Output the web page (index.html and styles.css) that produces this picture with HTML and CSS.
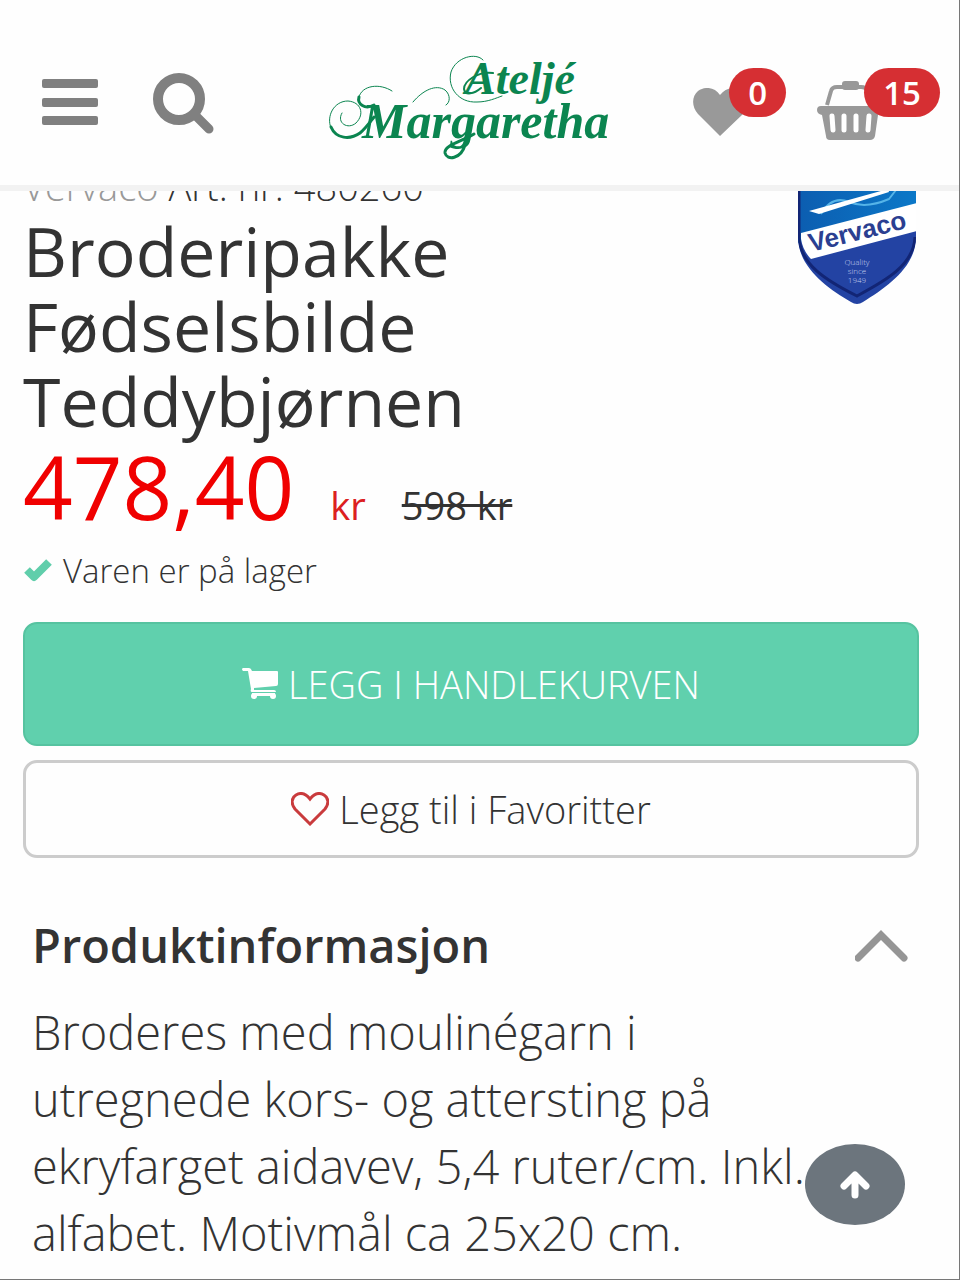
FILE: index.html
```html
<!DOCTYPE html>
<html lang="no">
<head>
  <meta charset="UTF-8" />
  <meta name="viewport" content="width=device-width, initial-scale=1.0"/>
  <title>Broderipakke Fødselsbilde Teddybjørnen - Ateljé Margaretha</title>
  <link rel="stylesheet" href="styles.css">
</head>
<body>

  <!-- Header -->
  <header class="site-header">
    <div class="header-left">
      <button class="icon-btn" aria-label="Meny">
        <svg width="56" height="52" viewBox="0 0 56 52" fill="#808080">
          <rect y="1" width="56" height="9" rx="2"/>
          <rect y="20" width="56" height="9" rx="2"/>
          <rect y="38" width="56" height="9" rx="2"/>
        </svg>
      </button>
      <button class="icon-btn" aria-label="Søk">
        <svg width="62" height="62" viewBox="0 0 62 62" fill="none" stroke="#808080">
          <circle cx="26" cy="26" r="21" stroke-width="10"/>
          <path d="M41 41 L56 56" stroke-width="9" stroke-linecap="round"/>
        </svg>
      </button>
    </div>

    <a href="#" class="logo" aria-label="Ateljé Margaretha">
      <svg width="284" height="120" viewBox="0 -8 284 120">
        <g fill="none" stroke="#0b8550" stroke-linecap="round">
          <path stroke-width="1" d="M155 8 C148 0 128 5 123 20 C119 36 131 51 149 50 C160 50 168 46 174 44"/>
          <path stroke-width="2" d="M165 21 C150 19 136 29 136 37 C137 44 146 42 153 36"/>
          <path stroke-width="1" d="M14 61 C8 71 20 78 28 71 C37 62 33 50 20 49 C6 49 -2 64 3 76"/>
          <path stroke-width="3" d="M3 75 C8 87 22 88 32 81 C38 76 42 70 46 65"/>
          <path stroke-width="3" d="M46 53 C37 58 29 52 31 45"/>
          <path stroke-width="1" d="M31 45 C34 33 52 31 64 39"/>
          <path stroke-width="1" d="M85 50 C95 38 108 32 117 38 C123 43 122 51 118 53"/>
          <path stroke-width="3" d="M137 93 C133 107 119 109 117 101 C116 93 133 90 146 82"/>
        </g>
        <text class="logo-text logo-top" x="137" y="42">Ateljé</text>
        <text class="logo-text logo-bottom" x="34" y="86">Margaretha</text>
      </svg>
    </a>

    <div class="header-right">
      <button class="icon-btn favorites" aria-label="Favoritter">
        <svg width="55" height="48" viewBox="0 0 55 48" fill="#999">
          <path d="M27 48 L5 26 C-2 18-1 8 5 3 C12-2 22-1 27 7 C33-1 43-2 50 3 C56 8 57 18 50 26 Z"/>
        </svg>
        <span class="badge">0</span>
      </button>
      <button class="icon-btn basket" aria-label="Handlekurv">
        <svg width="64" height="60" viewBox="0 0 64 60">
          <path d="M10 25 L14 11 Q15 7 20 7 H44 Q49 7 50 11 L54 25" fill="none" stroke="#999" stroke-width="4"/>
          <rect x="25" y="1" width="17" height="9" rx="3" fill="#999"/>
          <path d="M4 26 H60 Q64 26 64 30 Q64 34 61 35 L58 56 Q57 60 53 60 H13 Q9 60 9 56 L5 35 Q0 34 0 30 Q0 26 4 26 Z" fill="#999"/>
          <path d="M15 36 L16 50 M27 36 V50 M39 36 V50 M52 36 L51 50" stroke="#fff" stroke-width="5" stroke-linecap="round"/>
        </svg>
        <span class="badge">15</span>
      </button>
    </div>
  </header>

  <main>
    <!-- Product -->
    <div class="product-top">
      <div class="product-title">
        <p class="article"><a href="#">Vervaco</a> Art. nr: 480260</p>
        <h1>Broderipakke Fødselsbilde Teddybjørnen</h1>
      </div>
      <a href="#" class="brand" aria-label="Vervaco">
        <svg width="120" height="150" viewBox="0 0 120 150">
          <defs>
            <linearGradient id="shieldBlue" x1="0" y1="0" x2="1" y2="0">
              <stop offset="0" stop-color="#0c5db0"/>
              <stop offset="1" stop-color="#0b78c8"/>
            </linearGradient>
            <clipPath id="shield">
              <path d="M1 0 H119 V78 C119 108 90 128 66 143 Q60 147 54 143 C30 129 1 108 1 78 Z"/>
            </clipPath>
          </defs>
          <g clip-path="url(#shield)">
            <rect width="120" height="150" fill="#2343a3"/>
            <path d="M0 0 H120 V50 L0 84 Z" fill="url(#shieldBlue)"/>
            <path d="M24 55 Q35 36 52 43 T92 40 L99 31" fill="none" stroke="#55b4e8" stroke-width="2"/>
            <path d="M12 52 L91 30 L92 33 L22 55 Z" fill="#fff"/>
            <path d="M2 0 V78 C3 105 28 121 60 137 C86 123 117 107 118 78" fill="none" stroke="#122575" stroke-width="3"/>
            <path d="M4 74 L120 44 V72 L14 100 Q6 92 4 80 Z" fill="#fff"/>
          </g>
          <text class="brand-name" transform="translate(14 93) rotate(-14)">Vervaco</text>
          <text class="brand-small" x="60" y="106">Quality</text>
          <text class="brand-small" x="60" y="115">since</text>
          <text class="brand-small" x="60" y="124">1949</text>
        </svg>
      </a>
    </div>

    <div class="price">
      <span class="price-now">478,40</span>
      <span class="price-unit">kr</span>
      <s>598 kr</s>
    </div>

    <p class="stock">
      <svg width="30" height="24" viewBox="0 0 30 24">
        <path d="M4 11 L11 18 L26 3" fill="none" stroke="#60ceab" stroke-width="8" stroke-linejoin="round"/>
      </svg>
      Varen er på lager
    </p>

    <button class="btn btn-cart">
      <svg width="36" height="32" viewBox="0 0 36 32" fill="#fff">
        <path d="M1 0 H7 Q9 0 10 3 H35 Q36 3 36 4 V16 Q36 18 34 18 L12 20 V22 H32 Q34 22 34 24 H10 Q8 24 9 21 L6 3 H1 Q-1 1 1 0 Z"/>
        <path d="M10 25 H33 V28 H10 Z"/>
        <circle cx="12" cy="28" r="3"/>
        <circle cx="31" cy="28" r="3"/>
      </svg>
      LEGG I HANDLEKURVEN
    </button>
    <button class="btn btn-favorite">
      <svg width="38" height="34" viewBox="0 0 38 34">
        <path d="M19 32 L4 17 C0 12 0 6 5 3 C10 0 15 2 19 7 C23 2 28 0 33 3 C38 6 38 12 34 17 Z" fill="none" stroke="#c93b3d" stroke-width="3"/>
      </svg>
      Legg til i Favoritter
    </button>

    <!-- Product information -->
    <section class="info">
      <h2>
        <button class="info-toggle" aria-expanded="true">
          Produktinformasjon
          <svg width="54" height="34" viewBox="0 0 54 34">
            <path d="M3 29 L26 6 L49 29" fill="none" stroke="#959595" stroke-width="7" stroke-linecap="round"/>
          </svg>
        </button>
      </h2>
      <p class="info-text">Broderes med moulinégarn i utregnede kors- og attersting på ekryfarget aidavev, 5,4 ruter/cm. Inkl. alfabet. Motivmål ca 25x20 cm.</p>
    </section>
  </main>

  <button class="to-top" aria-label="Til toppen">
    <svg width="30" height="28" viewBox="0 0 30 28">
      <path d="M15 24 V5 M4 15 L15 4 L26 15" fill="none" stroke="#fff" stroke-width="7" stroke-linecap="round" stroke-linejoin="round"/>
    </svg>
  </button>

</body>
</html>
```
FILE: styles.css
```css
* {
  box-sizing: border-box;
}

body {
  margin: 0;
  min-height: 100vh;
  font-family: "Open Sans", sans-serif;
  font-weight: 300;
  color: #333;
  background: #fefefe;
  border-right: 1px solid #777;
  border-bottom: 1px solid #777;
}

h1, h2, p {
  margin: 0;
}

button {
  font: inherit;
  color: inherit;
  cursor: pointer;
}

svg {
  display: block;
  flex: none;
}

/* Header */
.site-header {
  position: fixed;
  top: 0;
  left: 0;
  right: 1px;
  z-index: 10;
  display: grid;
  grid-template-columns: 1fr auto 1fr;
  align-items: center;
  height: 191px;
  padding: 22px 19px 0 0;
  background: #fefefe;
  border-bottom: 6px solid #f2f2f2;
}

.header-left {
  display: flex;
  align-items: center;
  gap: 55px;
  padding-left: 42px;
}

.header-right {
  display: flex;
  justify-content: flex-end;
  gap: 31px;
}

.icon-btn {
  position: relative;
  padding: 0;
  border: none;
  background: none;
}

.favorites {
  width: 93px;
  padding-top: 16px;
}

.basket {
  width: 123px;
  padding-top: 12px;
}

.badge {
  position: absolute;
  top: 0;
  right: 0;
  padding: 0 19px;
  border-radius: 25px;
  background: #d62f33;
  color: #fff;
  font-size: 33px;
  font-weight: 600;
  line-height: 49px;
}

.logo-text {
  font-family: "Liberation Serif", serif;
  font-style: italic;
  font-weight: bold;
  fill: #0b8550;
}

.logo-top {
  font-size: 46px;
}

.logo-bottom {
  font-size: 50px;
}

/* Product */
main {
  padding: 159px 40px 12px 23px;
}

.product-top {
  display: flex;
  justify-content: space-between;
}

.product-title {
  max-width: 600px;
}

.article {
  font-size: 38px;
  line-height: 54px;
}

.article a {
  color: #999;
  text-decoration: none;
}

h1 {
  font-size: 68px;
  font-weight: 400;
  line-height: 75px;
}

.brand {
  margin-right: 2px;
}

.brand-name {
  font-family: "Liberation Sans", sans-serif;
  font-size: 26px;
  font-weight: bold;
  fill: #2b3f91;
}

.brand-small {
  font-size: 8px;
  text-anchor: middle;
  fill: #c5d0ee;
}

.price {
  display: flex;
  align-items: baseline;
  gap: 36px;
  font-size: 38px;
  font-weight: 400;
  line-height: 48px;
}

.price-now {
  font-size: 87px;
  line-height: 96px;
  color: #f00000;
}

.price-unit {
  color: #dc2020;
}

.stock {
  display: flex;
  align-items: center;
  gap: 10px;
  margin-top: 13px;
  font-size: 33px;
  line-height: 48px;
}

.btn {
  display: flex;
  align-items: center;
  justify-content: center;
  gap: 10px;
  width: 100%;
  font-size: 38px;
  line-height: 54px;
  border-radius: 14px;
}

.btn-cart {
  margin-top: 27px;
  padding: 33px 20px;
  color: #fff;
  background: #60d0ad;
  border: 2px solid #56c3a0;
}

.btn-favorite {
  margin-top: 14px;
  padding: 19px 20px;
  background: #fefefe;
  border: 3px solid #ccc;
}

/* Product information */
.info {
  margin-top: 54px;
  padding: 0 10px 0 9px;
  font-size: 47px;
  line-height: 67px;
}

h2 {
  font-size: 47px;
}

.info-toggle {
  display: flex;
  align-items: center;
  justify-content: space-between;
  width: 100%;
  padding: 0;
  border: none;
  background: none;
  font-weight: 600;
}

.info-text {
  margin-top: 20px;
  padding-right: 60px;
}

.to-top {
  position: fixed;
  right: 55px;
  bottom: 55px;
  display: flex;
  align-items: center;
  justify-content: center;
  width: 100px;
  height: 81px;
  border: none;
  border-radius: 50%;
  background: #6c757d;
}
```
